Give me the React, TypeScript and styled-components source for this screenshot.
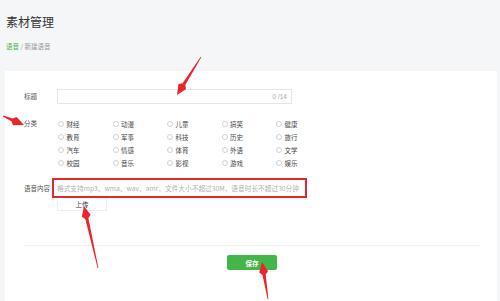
import React from "react";
import styled, { createGlobalStyle } from "styled-components";

const Global = createGlobalStyle`
  html, body { margin: 0; padding: 0; background: #f5f6f8; }
  body { font-family: "Noto Sans CJK SC", "Noto Sans", sans-serif; color: #333; }
  * { box-sizing: border-box; }
`;

const Page = styled.div`
  position: relative;
  width: 500px;
  height: 301px;
  overflow: hidden;
  background: #f5f6f8;
  display: flex;
  flex-direction: column;
`;

const Header = styled.div`
  padding: 13px 0 0 6px;
  height: 71px;
`;

const Title = styled.h1`
  margin: 0;
  font-size: 12px;
  line-height: 18px;
  font-weight: 400;
  color: #333;
`;

const Crumbs = styled.div`
  margin-top: 10px;
  font-size: 6.5px;
  line-height: 10px;
  color: #999;
`;

const CrumbLink = styled.span`
  color: #44b549;
`;

const Card = styled.div`
  flex: 1;
  margin: 0 3px 0 5px;
  background: #fff;
  padding: 18px 17px 0 19px;
  display: flex;
  flex-direction: column;
`;

const Row = styled.div<{ $mt?: number; $align?: string }>`
  display: flex;
  align-items: ${(p) => p.$align || "center"};
  margin-top: ${(p) => p.$mt || 0}px;
`;

const Label = styled.div<{ $w?: number }>`
  width: ${(p) => p.$w || 33}px;
  flex: none;
  font-size: 6.5px;
  line-height: 13px;
  color: #555;
  white-space: nowrap;
`;

const TitleInput = styled.div`
  width: 235px;
  height: 15px;
  border: 1px solid #e4e6eb;
  display: flex;
  align-items: center;
  justify-content: flex-end;
  padding-right: 4px;
  font-family: "Liberation Sans", sans-serif;
  font-size: 6.5px;
  color: #aaa;
`;

const Grid = styled.div`
  display: grid;
  grid-template-columns: repeat(5, 54.5px);
  grid-auto-rows: 13px;
  margin-left: 1px;
`;

const Radio = styled.label`
  display: flex;
  align-items: center;
  gap: 2.5px;
  font-size: 6.5px;
  color: #444;
  white-space: nowrap;
`;

const Circle = styled.span`
  width: 6px;
  height: 6px;
  border-radius: 50%;
  border: 1px solid #cfd2d7;
  flex: none;
`;

const RedBox = styled.div`
  width: 255px;
  height: 20px;
  border: 2.5px solid #e5262c;
  padding: 0 0 0 3px;
  display: flex;
  align-items: center;
  font-size: 6.7px;
  color: #b0b0b0;
  white-space: nowrap;
  overflow: hidden;
`;

const UploadBtn = styled.div`
  margin-left: 33px;
  width: 50px;
  height: 13px;
  border: 1px solid #eceef1;
  border-top: none;
  display: flex;
  align-items: center;
  justify-content: center;
  font-size: 6.5px;
  color: #333;
`;

const Divider = styled.div`
  margin-top: 34px;
  height: 1px;
  background: #eef0f2;
`;

const Footer = styled.div`
  display: flex;
  justify-content: center;
  margin-top: 9px;
`;

const SaveBtn = styled.div`
  width: 50px;
  height: 15px;
  background: #44b549;
  border-radius: 2px;
  color: #fff;
  font-size: 6.5px;
  font-weight: 700;
  display: flex;
  align-items: center;
  justify-content: center;
`;

const Overlay = styled.svg`
  position: absolute;
  left: 0;
  top: 0;
  pointer-events: none;
`;

const cats = [
  "财经", "动漫", "儿童", "搞笑", "健康",
  "教育", "军事", "科技", "历史", "旅行",
  "汽车", "情感", "体育", "外语", "文学",
  "校园", "音乐", "影视", "游戏", "娱乐",
];

function arrowPoints(tx: number, ty: number, px: number, py: number) {
  const dx = px - tx;
  const dy = py - ty;
  const len = Math.hypot(dx, dy);
  const ux = dx / len;
  const uy = dy / len;
  const nx = -uy;
  const ny = ux;
  const head = 13;
  const bx = px - ux * head;
  const by = py - uy * head;
  const nkx = px - ux * (head - 3);
  const nky = py - uy * (head - 3);
  const pts = [
    [tx + nx * 0.4, ty + ny * 0.4],
    [bx + nx * 1.6, by + ny * 1.6],
    [nkx + nx * 4.5, nky + ny * 4.5],
    [px, py],
    [nkx - nx * 4.5, nky - ny * 4.5],
    [bx - nx * 1.6, by - ny * 1.6],
    [tx - nx * 0.4, ty - ny * 0.4],
  ];
  return pts.map((p) => p.map((v) => v.toFixed(1)).join(",")).join(" ");
}

const arrows: [number, number, number, number][] = [
  [201, 57, 177, 95],
  [3, 116, 24, 125],
  [98, 268, 84, 206],
  [268, 299, 262, 262],
];

export default function App() {
  return (
    <Page>
      <Global />
      <Header>
        <Title>素材管理</Title>
        <Crumbs>
          <CrumbLink>语音</CrumbLink> / 新建语音
        </Crumbs>
      </Header>
      <Card>
        <Row>
          <Label>标题</Label>
          <TitleInput>0 /14</TitleInput>
        </Row>
        <Row $mt={13} $align="flex-start">
          <Label>分类</Label>
          <Grid>
            {cats.map((c) => (
              <Radio key={c}>
                <Circle />
                {c}
              </Radio>
            ))}
          </Grid>
        </Row>
        <Row $mt={9}>
          <Label $w={28}>语音内容</Label>
          <RedBox>格式支持mp3、wma、wav、amr，文件大小不超过30M，语音时长不超过30分钟</RedBox>
        </Row>
        <UploadBtn>上传</UploadBtn>
        <Divider />
        <Footer>
          <SaveBtn>保存</SaveBtn>
        </Footer>
      </Card>
      <Overlay width="500" height="301" viewBox="0 0 500 301">
        {arrows.map((a, i) => (
          <polygon key={i} points={arrowPoints(a[0], a[1], a[2], a[3])} fill="#e8262b" />
        ))}
      </Overlay>
    </Page>
  );
}
